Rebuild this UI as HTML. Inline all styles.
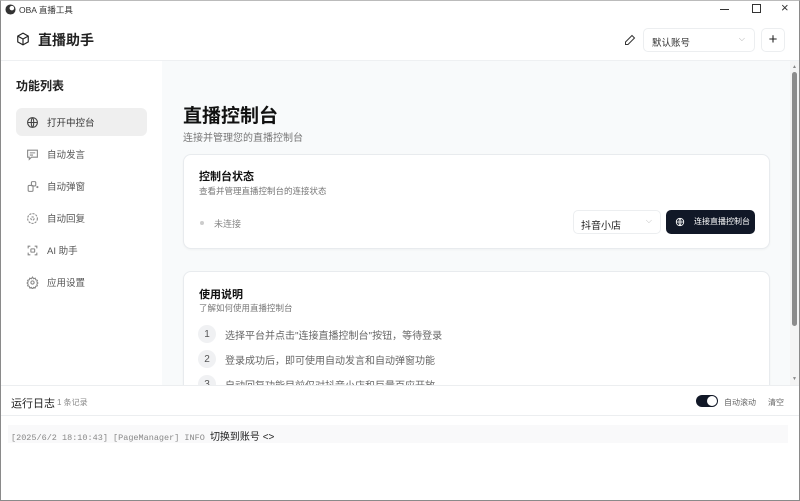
<!DOCTYPE html>
<html><head><meta charset="utf-8"><style>
*{box-sizing:border-box;margin:0;padding:0}
body{width:800px;height:501px;overflow:hidden;background:#fff;font-family:"Liberation Sans","Noto Sans CJK SC",sans-serif;color:#111;position:relative}
.abs{position:absolute}
.win{position:absolute;left:0;top:0;width:800px;height:501px;border:1px solid #8a8a8a;border-top:1px solid #bbb}
.side{left:1px;top:61px;width:161px;height:324px;background:#fff}
.main{left:162px;top:61px;width:628px;height:324px;background:#f8fafb;overflow:hidden}
.card{position:absolute;background:#fff;border:1px solid #e8ebee;border-radius:8px;box-shadow:0 1px 2px rgba(0,0,0,.04)}
.nav{position:absolute;left:16px;width:131px;height:28px;border-radius:6px;font-size:9.5px;color:#555;display:flex;align-items:center;padding-left:10px}
.nav svg{margin-right:8px}
.step{display:flex;align-items:center;font-size:10px;color:#666;position:absolute;left:14px}
.num{width:18px;height:18px;border-radius:50%;background:#f0f1f3;color:#555;font-size:10px;display:flex;align-items:center;justify-content:center;margin-right:9px}
</style></head><body>
<div class="win"></div>
<svg class="abs" style="left:5px;top:4px" width="11" height="11" viewBox="0 0 12 12"><circle cx="6" cy="6" r="5.5" fill="#333"/><circle cx="7.5" cy="4.5" r="2.5" fill="#fff"/></svg>
<div class="abs" style="left:19px;top:4px;font-size:8.5px;color:#333">OBA 直播工具</div>
<div class="abs" style="left:720px;top:9px;width:9px;height:1px;background:#333"></div>
<div class="abs" style="left:752px;top:4px;width:9px;height:9px;border:1px solid #333"></div>
<div class="abs" style="left:781px;top:0px;font-size:13px;color:#333">×</div>
<svg class="abs" style="left:16px;top:32px" width="14" height="14" viewBox="0 0 24 24" fill="none" stroke="#222" stroke-width="2"><path d="M12 2l9 5v10l-9 5-9-5V7z"/><path d="M3 7l9 5 9-5M12 12v10"/></svg>
<div class="abs" style="left:38px;top:30px;font-size:14px;font-weight:bold;color:#222">直播助手</div>
<svg class="abs" style="left:624px;top:34px" width="12" height="12" viewBox="0 0 24 24" fill="none" stroke="#333" stroke-width="2"><path d="M16 3l5 5L8 21H3v-5z"/></svg>
<div class="abs" style="left:643px;top:28px;width:112px;height:24px;border:1px solid #eceef0;border-radius:5px;font-size:9.5px;color:#333;padding:6px 0 0 8px">默认账号<span style="position:absolute;right:9px;top:5px;color:#aaa;font-size:8px">⌵</span></div>
<div class="abs" style="left:761px;top:28px;width:24px;height:24px;border:1px solid #eceef0;border-radius:5px;font-size:15px;text-align:center;line-height:21px;color:#222">+</div>
<div class="abs" style="left:1px;top:60px;width:798px;height:1px;background:#eef0f2"></div>
<div class="abs side">
<div class="abs" style="left:15px;top:16px;font-size:12px;font-weight:bold;color:#222">功能列表</div>
</div>
<div class="nav" style="top:108px;background:#efefef;color:#333"><svg width="13" height="13" viewBox="0 0 24 24" fill="none" stroke="#444" stroke-width="2"><circle cx="12" cy="12" r="9"/><path d="M3 12h18M12 3c3 3 3 15 0 18M12 3c-3 3-3 15 0 18"/></svg>打开中控台</div>
<div class="nav" style="top:140px"><svg width="13" height="13" viewBox="0 0 24 24" fill="none" stroke="#888" stroke-width="2"><path d="M3 4h18v13H10l-4 4v-4H3z"/><path d="M7 9h10M7 13h6"/></svg>自动发言</div>
<div class="nav" style="top:172px"><svg width="13" height="13" viewBox="0 0 24 24" fill="none" stroke="#888" stroke-width="2"><rect x="4" y="10" width="9" height="11" rx="2"/><rect x="10" y="3" width="8" height="8" rx="2"/><circle cx="21" cy="13" r="1"/></svg>自动弹窗</div>
<div class="nav" style="top:204px"><svg width="13" height="13" viewBox="0 0 24 24" fill="none" stroke="#888" stroke-width="2" stroke-dasharray="4 2"><circle cx="12" cy="12" r="9"/><circle cx="12" cy="12" r="3"/></svg>自动回复</div>
<div class="nav" style="top:236px"><svg width="13" height="13" viewBox="0 0 24 24" fill="none" stroke="#888" stroke-width="2"><path d="M4 8V4h4M20 16v4h-4M16 4h4v4M4 16v4h4"/><rect x="9" y="9" width="7" height="6" rx="1"/></svg>AI 助手</div>
<div class="nav" style="top:268px"><svg width="13" height="13" viewBox="0 0 24 24" fill="none" stroke="#888" stroke-width="2"><circle cx="12" cy="12" r="3"/><path d="M12 2l2 3 3-1 1 3 3 1-1 3 2 2-2 2 1 3-3 1-1 3-3-1-2 3-2-3-3 1-1-3-3-1 1-3-2-2 2-2-1-3 3-1 1-3 3 1z"/></svg>应用设置</div>
<div class="abs main">
<div class="abs" style="left:21px;top:40px;font-size:19px;font-weight:bold;color:#111">直播控制台</div>
<div class="abs" style="left:21px;top:68px;font-size:10px;color:#777">连接并管理您的直播控制台</div>
<div class="card" style="left:21px;top:93px;width:587px;height:95px">
<div class="abs" style="left:15px;top:13px;font-size:11px;font-weight:bold;color:#111">控制台状态</div>
<div class="abs" style="left:15px;top:30px;font-size:8.5px;color:#777">查看并管理直播控制台的连接状态</div>
<div class="abs" style="left:16px;top:66px;width:4px;height:4px;border-radius:50%;background:#ccc"></div>
<div class="abs" style="left:30px;top:62px;font-size:9px;color:#888">未连接</div>
<div class="abs" style="left:389px;top:55px;width:88px;height:24px;border:1px solid #eceef0;border-radius:5px;font-size:10px;color:#222;padding:6px 0 0 7px">抖音小店<span style="position:absolute;right:8px;top:5px;color:#bbb;font-size:8px">⌵</span></div>
<div class="abs" style="left:482px;top:55px;width:89px;height:24px;background:#111827;border-radius:5px;font-size:8px;color:#fff;padding:6px 0 0 28px;white-space:nowrap">连接直播控制台</div>
<svg class="abs" style="left:491px;top:62px" width="10" height="10" viewBox="0 0 24 24" fill="none" stroke="#fff" stroke-width="2"><circle cx="12" cy="12" r="9"/><path d="M3 12h18M12 3c3 3 3 15 0 18M12 3c-3 3-3 15 0 18"/></svg>
</div>
<div class="card" style="left:21px;top:210px;width:587px;height:140px">
<div class="abs" style="left:15px;top:14px;font-size:11px;font-weight:bold;color:#111">使用说明</div>
<div class="abs" style="left:15px;top:30px;font-size:8.5px;color:#777">了解如何使用直播控制台</div>
<div class="step" style="top:53px"><span class="num">1</span>选择平台并点击"连接直播控制台"按钮，等待登录</div>
<div class="step" style="top:78px"><span class="num">2</span>登录成功后，即可使用自动发言和自动弹窗功能</div>
<div class="step" style="top:103px"><span class="num">3</span>自动回复功能目前仅对抖音小店和巨量百应开放</div>
</div>
</div>
<div class="abs" style="left:790px;top:61px;width:9px;height:324px;background:#f4f4f4"></div>
<div class="abs" style="left:792px;top:72px;width:5px;height:254px;background:#8c8c8c;border-radius:3px"></div>
<div class="abs" style="left:792px;top:64px;font-size:5px;color:#888">▲</div>
<div class="abs" style="left:792px;top:376px;font-size:5px;color:#888">▼</div>
<div class="abs" style="left:1px;top:385px;width:798px;height:115px;background:#fff;border-top:1px solid #eceef0"></div>
<div class="abs" style="left:11px;top:395px;font-size:11px;color:#222">运行日志</div>
<div class="abs" style="left:57px;top:397px;font-size:8px;color:#888">1 条记录</div>
<div class="abs" style="left:696px;top:395px;width:22px;height:12px;border-radius:6px;background:#111827"></div>
<div class="abs" style="left:707px;top:396px;width:10px;height:10px;border-radius:50%;background:#fff"></div>
<div class="abs" style="left:724px;top:397px;font-size:8px;color:#666">自动滚动</div>
<div class="abs" style="left:768px;top:397px;font-size:8px;color:#666">清空</div>
<div class="abs" style="left:1px;top:415px;width:798px;height:1px;background:#eceef0"></div>
<div class="abs" style="left:8px;top:425px;width:780px;height:18px;background:#f9f9fa"></div>
<div class="abs" style="left:11px;top:428px;font-size:8.5px;font-family:'Liberation Mono','Noto Sans CJK SC',monospace;color:#888;white-space:nowrap">[2025/6/2 18:10:43] [PageManager] INFO <span style="color:#222;font-family:'Liberation Sans','Noto Sans CJK SC',sans-serif;font-size:10px">切换到账号 &lt;&gt;</span></div>
</body></html>
